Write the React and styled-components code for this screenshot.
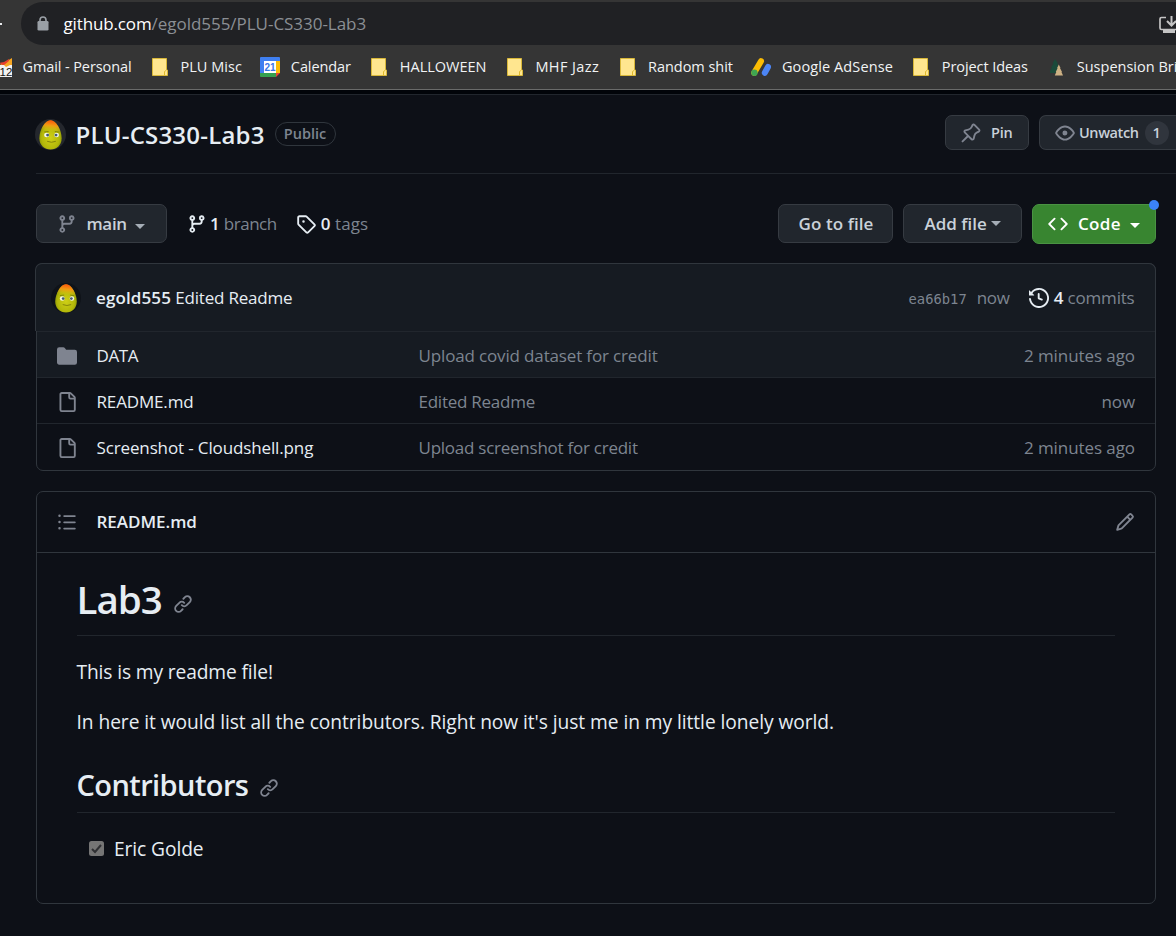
import React from 'react';
import styled, { createGlobalStyle } from 'styled-components';

const Global = createGlobalStyle`
  * { box-sizing: border-box; }
  html, body { margin: 0; height: 936px; overflow: hidden; background: #0d1017; }
  body { font-family: "Open Sans", "Noto Sans", sans-serif; color: #e6edf3; }
`;

const OCTICONS = {
  branch: 'M9.5 3.25a2.25 2.25 0 1 1 3 2.122V6A2.5 2.5 0 0 1 10 8.5H6a1 1 0 0 0-1 1v1.128a2.251 2.251 0 1 1-1.5 0V5.372a2.25 2.25 0 1 1 1.5 0v1.836A2.493 2.493 0 0 1 6 7h4a1 1 0 0 0 1-1v-.628A2.25 2.25 0 0 1 9.5 3.25Zm-6 0a.75.75 0 1 0 1.5 0 .75.75 0 0 0-1.5 0Zm8.25-.75a.75.75 0 1 0 0 1.5.75.75 0 0 0 0-1.5ZM4.25 12a.75.75 0 1 0 0 1.5.75.75 0 0 0 0-1.5Z',
  tag: 'M1 7.775V2.75C1 1.784 1.784 1 2.75 1h5.025c.464 0 .91.184 1.238.513l6.25 6.25a1.75 1.75 0 0 1 0 2.474l-5.026 5.026a1.75 1.75 0 0 1-2.474 0l-6.25-6.25A1.752 1.752 0 0 1 1 7.775Zm1.5 0c0 .066.026.13.073.177l6.25 6.25a.25.25 0 0 0 .354 0l5.025-5.025a.25.25 0 0 0 0-.354l-6.25-6.25a.25.25 0 0 0-.177-.073H2.75a.25.25 0 0 0-.25.25ZM6 5a1 1 0 1 1 0 2 1 1 0 0 1 0-2Z',
  pin: 'm11.294.984 3.722 3.722a1.75 1.75 0 0 1-.504 2.826l-1.327.613a3.089 3.089 0 0 0-1.707 2.084l-.584 2.454c-.317 1.332-1.972 1.8-2.94.832L5.75 11.311 1.78 15.28a.749.749 0 1 1-1.06-1.06l3.969-3.97-2.204-2.204c-.968-.968-.5-2.623.832-2.94l2.454-.584a3.08 3.08 0 0 0 2.084-1.707l.613-1.327a1.75 1.75 0 0 1 2.826-.504ZM6.283 9.723l2.732 2.731a.25.25 0 0 0 .42-.119l.584-2.454a4.586 4.586 0 0 1 2.537-3.098l1.328-.613a.25.25 0 0 0 .072-.404l-3.722-3.722a.25.25 0 0 0-.404.072l-.613 1.328a4.584 4.584 0 0 1-3.098 2.537l-2.454.584a.25.25 0 0 0-.119.42l2.731 2.732Z',
  eye: 'M8 2c1.981 0 3.671.992 4.933 2.078 1.27 1.091 2.187 2.345 2.637 3.023a1.62 1.62 0 0 1 0 1.798c-.45.678-1.367 1.932-2.637 3.023C11.67 13.008 9.981 14 8 14c-1.981 0-3.671-.992-4.933-2.078C1.797 10.83.88 9.576.43 8.898a1.62 1.62 0 0 1 0-1.798c.45-.677 1.367-1.931 2.637-3.022C4.33 2.992 6.019 2 8 2ZM1.679 7.932a.12.12 0 0 0 0 .136c.411.622 1.241 1.75 2.366 2.717C5.176 11.758 6.527 12.5 8 12.5c1.473 0 2.825-.742 3.955-1.715 1.124-.967 1.954-2.096 2.366-2.717a.12.12 0 0 0 0-.136c-.412-.621-1.242-1.75-2.366-2.717C10.824 4.242 9.473 3.5 8 3.5c-1.473 0-2.825.742-3.955 1.715-1.124.967-1.954 2.096-2.366 2.717ZM8 10a2 2 0 1 1-.001-3.999A2 2 0 0 1 8 10Z',
  history: 'm.427 1.927 1.215 1.215a8.002 8.002 0 1 1-1.6 5.685.75.75 0 1 1 1.493-.154 6.5 6.5 0 1 0 1.18-4.458l1.358 1.358A.25.25 0 0 1 3.896 6H.25A.25.25 0 0 1 0 5.75V2.104a.25.25 0 0 1 .427-.177ZM7.75 4a.75.75 0 0 1 .75.75v2.992l2.028.812a.75.75 0 0 1-.557 1.392l-2.5-1A.751.751 0 0 1 7 8.25v-3.5A.75.75 0 0 1 7.75 4Z',
  file: 'M2 1.75C2 .784 2.784 0 3.75 0h6.586c.464 0 .909.184 1.237.513l2.914 2.914c.329.328.513.773.513 1.237v9.586A1.75 1.75 0 0 1 13.25 16h-9.5A1.75 1.75 0 0 1 2 14.25Zm1.75-.25a.25.25 0 0 0-.25.25v12.5c0 .138.112.25.25.25h9.5a.25.25 0 0 0 .25-.25V6h-2.75A1.75 1.75 0 0 1 9 4.25V1.5Zm6.75.062V4.25c0 .138.112.25.25.25h2.688l-.011-.013-2.914-2.914-.013-.011Z',
  folder: 'M1.75 1A1.75 1.75 0 0 0 0 2.75v10.5C0 14.216.784 15 1.75 15h12.5A1.75 1.75 0 0 0 16 13.25v-8.5A1.75 1.75 0 0 0 14.25 3H7.5a.25.25 0 0 1-.2-.1l-.9-1.2C6.07 1.26 5.55 1 5 1H1.75Z',
  list: 'M5.75 2.5h8.5a.75.75 0 0 1 0 1.5h-8.5a.75.75 0 0 1 0-1.5Zm0 5h8.5a.75.75 0 0 1 0 1.5h-8.5a.75.75 0 0 1 0-1.5Zm0 5h8.5a.75.75 0 0 1 0 1.5h-8.5a.75.75 0 0 1 0-1.5ZM2 14a1 1 0 1 1 0-2 1 1 0 0 1 0 2Zm1-6a1 1 0 1 1-2 0 1 1 0 0 1 2 0ZM2 4a1 1 0 1 1 0-2 1 1 0 0 1 0 2Z',
  pencil: 'M11.013 1.427a1.75 1.75 0 0 1 2.474 0l1.086 1.086a1.75 1.75 0 0 1 0 2.474l-8.61 8.61c-.21.21-.47.364-.756.445l-3.251.93a.75.75 0 0 1-.927-.928l.929-3.25c.081-.286.235-.547.445-.758l8.61-8.61Zm.176 4.823L9.75 4.81l-6.286 6.287a.253.253 0 0 0-.064.108l-.558 1.953 1.953-.558a.253.253 0 0 0 .108-.064Zm1.238-3.763a.25.25 0 0 0-.354 0L10.811 3.75l1.439 1.44 1.263-1.263a.25.25 0 0 0 0-.354Z',
  link: 'm7.775 3.275 1.25-1.25a3.5 3.5 0 1 1 4.95 4.95l-2.5 2.5a3.5 3.5 0 0 1-4.95 0 .751.751 0 0 1 .018-1.042.751.751 0 0 1 1.042-.018 1.998 1.998 0 0 0 2.83 0l2.5-2.5a2.002 2.002 0 0 0-2.83-2.83l-1.25 1.25a.751.751 0 0 1-1.042-.018.751.751 0 0 1-.018-1.042Zm-4.69 9.64a1.998 1.998 0 0 0 2.83 0l1.25-1.25a.751.751 0 0 1 1.042.018.751.751 0 0 1 .018 1.042l-1.25 1.25a3.5 3.5 0 1 1-4.95-4.95l2.5-2.5a3.5 3.5 0 0 1 4.95 0 .751.751 0 0 1-.018 1.042.751.751 0 0 1-1.042.018 1.998 1.998 0 0 0-2.83 0l-2.5 2.5a1.998 1.998 0 0 0 0 2.83Z',
  code: 'm11.28 3.22 4.25 4.25a.75.75 0 0 1 0 1.06l-4.25 4.25a.749.749 0 0 1-1.275-.326.749.749 0 0 1 .215-.734L13.94 8l-3.72-3.72a.749.749 0 0 1 .326-1.275.749.749 0 0 1 .734.215Zm-6.56 0a.751.751 0 0 1 1.042.018.751.751 0 0 1 .018 1.042L2.06 8l3.72 3.72a.749.749 0 0 1-.326 1.275.749.749 0 0 1-.734-.215L.47 8.53a.75.75 0 0 1 0-1.06Z',
};

const IconSvg = styled.svg`
  display: block;
  flex: none;
  fill: ${(p) => p.$color};
`;
const Icon = ({ name, size = 20, color = '#7f8490' }) => (
  <IconSvg width={size} height={size} viewBox="0 0 16 16" $color={color}>
    <path d={OCTICONS[name]} />
  </IconSvg>
);

const Text = styled.span`
  flex: none;
  white-space: pre;
  font-size: ${(p) => p.$size || 17}px;
  line-height: 24px;
  font-weight: ${(p) => (p.$bold ? 600 : 400)};
  letter-spacing: ${(p) => p.$track || 0}px;
  color: ${(p) => p.$color || '#e6edf3'};
`;

/* Browser chrome */
const Chrome = styled.header`
  height: 90px;
  background: #353535;
  border-bottom: 1px solid #6a6b6a;
  padding-top: 2px;
  overflow: hidden;
`;
const AddressRow = styled.div`
  display: flex;
  align-items: center;
  height: 43px;
`;
const ToolbarEdge = styled.div`
  width: 21px;
  flex: none;
`;
const ToolbarTick = styled.div`
  width: 2px;
  height: 2px;
  background: #e8eaed;
`;
const AddressBar = styled.div`
  flex: 1;
  height: 43px;
  display: flex;
  align-items: center;
  background: #202124;
  border-radius: 22px 0 0 22px;
  padding-left: 16px;
`;
const Url = styled.div`
  display: flex;
  flex: 1;
  margin-left: 14.5px;
`;
const InstallSlot = styled.div`
  width: 18px;
  overflow: hidden;
  padding-top: 7px;
`;
const Bookmarks = styled.nav`
  display: flex;
  align-items: center;
  gap: 18.4px;
  height: 44px;
  margin-left: -8px;
  width: 1300px;
`;
const Bookmark = styled.div`
  display: flex;
  align-items: center;
  gap: 10.5px;
  flex: none;
`;
const BookmarkIcon = styled.div`
  width: 20px;
  height: 20px;
  flex: none;
`;
const Gap = styled.div`
  height: 5px;
  background: #010409;
  border-bottom: 1px solid #21262d;
`;

/* Repository page */
const Page = styled.main`
  padding-left: 36px;
`;
const TitleRow = styled.div`
  display: flex;
  align-items: center;
  height: 79px;
  border-bottom: 1px solid #21262d;
  padding: 0 0 3px;
`;
const RepoId = styled.div`
  display: flex;
  align-items: center;
  margin-left: -1px;
  padding-top: 3px;
`;
const RepoTitle = styled.h1`
  margin: 0 0 0 9.5px;
  font-size: 24px;
  line-height: 32px;
  font-weight: 600;
  letter-spacing: 0.2px;
  padding-top: 1px;
  flex: none;
`;
const Pill = styled.span`
  height: 24px;
  width: 61px;
  margin-left: 10px;
  border: 1px solid #30363d;
  border-radius: 12px;
  display: flex;
  align-items: center;
  justify-content: center;
  flex: none;
`;
const Spacer = styled.div`
  flex: 1;
`;
const Button = styled.button`
  position: relative;
  display: flex;
  align-items: center;
  flex: none;
  gap: ${(p) => p.$gap || 0}px;
  width: ${(p) => p.$w}px;
  height: ${(p) => p.$h || 39}px;
  padding: 0 0 0 ${(p) => p.$pad}px;
  margin-left: ${(p) => p.$ml || 0}px;
  font-family: inherit;
  border: 1px solid ${(p) => (p.$green ? '#4a9343' : '#363b42')};
  background: ${(p) => (p.$green ? '#388530' : '#21262d')};
  border-radius: ${(p) => (p.$open ? '7px 0 0 7px' : '7px')};
  border-right-width: ${(p) => (p.$open ? 0 : 1)}px;
`;
const Count = styled.span`
  width: 24px;
  height: 24px;
  border-radius: 12px;
  margin-left: 2px;
  background: #30353d;
  display: flex;
  align-items: center;
  justify-content: center;
`;
const Caret = styled.i`
  width: 0;
  height: 0;
  border: 5px solid transparent;
  border-top-color: ${(p) => p.$color || '#a5adb6'};
  border-bottom-width: 0;
  margin-left: -1px;
  margin-top: ${(p) => p.$drop || 0}px;
`;
const NoticeDot = styled.i`
  position: absolute;
  top: -5px;
  right: -4px;
  width: 10px;
  height: 10px;
  border-radius: 5px;
  background: #3b82f6;
`;
const ActionRow = styled.div`
  display: flex;
  align-items: flex-start;
  height: 89px;
  padding: 30px 20px 0 0;
`;
const Stat = styled.div`
  display: flex;
  align-items: center;
  height: 39px;
  margin-left: ${(p) => p.$ml}px;
`;
const StatText = styled.div`
  margin-left: ${(p) => p.$ml || 0}px;
  display: flex;
`;

const Box = styled.section`
  width: 1120px;
  border: 1px solid #30363d;
  border-radius: 7px;
`;
const CommitBar = styled.div`
  display: flex;
  align-items: center;
  height: 68px;
  margin: -1px -1px 0 -2px;
  padding: 0 20.5px 0 15px;
  background: #161b22;
  border: 1px solid #30363d;
  border-bottom: 0;
  border-radius: 7px 7px 0 0;
`;
const FileRow = styled.div`
  display: grid;
  grid-template-columns: 39.5px 322px 1fr auto;
  align-items: center;
  height: 46px;
  padding: 2px 20px 0;
  border-top: 1px solid #21262d;
  background: ${(p) => (p.$active ? '#161b22' : 'transparent')};
  &:last-child { height: 47px; padding-bottom: 1px; }
`;
const Hash = styled.span`
  font-family: "DejaVu Sans Mono", "Liberation Mono", monospace;
  font-size: 13.8px;
  line-height: 24px;
  color: #7d8590;
  margin-right: 10px;
  padding-top: 2px;
`;

const Readme = styled(Box)`
  margin-top: 20px;
  height: 413px;
`;
const ReadmeBar = styled.div`
  display: flex;
  align-items: center;
  height: 61px;
  padding: 0 20px;
  border-bottom: 1px solid #30363d;
`;
const Body = styled.article`
  padding: 20px 40px;
`;
const Heading = styled.h2`
  display: flex;
  align-items: center;
  margin: ${(p) => p.$top || 0}px 0 0 -0.5px;
  height: ${(p) => p.$h}px;
  padding-bottom: ${(p) => p.$pb}px;
  border-bottom: 1px solid #21262d;
  font-size: ${(p) => p.$size}px;
  letter-spacing: ${(p) => p.$track}px;
  font-weight: 600;
  gap: ${(p) => p.$gap}px;
`;
const LinkSlot = styled.span`
  padding-top: ${(p) => p.$top}px;
`;
const Paragraph = styled.p`
  margin: ${(p) => p.$top}px 0 0 -0.5px;
  font-size: 19.2px;
  line-height: 30px;
  letter-spacing: ${(p) => p.$track}px;
  white-space: nowrap;
`;
const Task = styled.div`
  display: flex;
  align-items: center;
  gap: 10.5px;
  margin-top: 21px;
  padding-left: 12px;
  height: 30px;
`;
const Checkbox = styled.span`
  width: 15px;
  height: 15px;
  border-radius: 2.5px;
  background: #757575;
  display: flex;
  margin-top: -1px;
`;

const Egg = ({ size, ring }) => (
  <svg width={size} height={size} viewBox="0 0 32 32">
    <defs>
      <radialGradient id={`egg${size}`} cx="0.5" cy="0.6" r="0.65">
        <stop offset="0" stopColor="#cfd016" />
        <stop offset="0.6" stopColor="#b3b80a" />
        <stop offset="1" stopColor="#6e7c02" />
      </radialGradient>
      <linearGradient id={`cap${size}`} x1="0.65" y1="0" x2="0.45" y2="1">
        <stop offset="0" stopColor="#ff4d0c" />
        <stop offset="0.5" stopColor="#f99a14" stopOpacity="0.9" />
        <stop offset="1" stopColor="#e0c414" stopOpacity="0" />
      </linearGradient>
    </defs>
    <circle cx="16" cy="16" r="16" fill={ring} />
    <path d="M16 1.2C10.5 1.2 4.5 11 4.5 19.8 4.5 27 9.5 31.4 16 31.4S27.5 27 27.5 19.8C27.5 11 21.5 1.2 16 1.2Z" fill={`url(#egg${size})`} />
    <path d="M16 1.2C11.8 1.2 7.8 6.5 5.9 12.5L26.1 12.5C24.2 6.5 20.2 1.2 16 1.2Z" fill={`url(#cap${size})`} />
    <ellipse cx="12" cy="16.5" rx="2.6" ry="2.4" fill="#f4f7ea" />
    <ellipse cx="22.3" cy="16.5" rx="2.4" ry="2.4" fill="#f4f7ea" />
    <circle cx="13" cy="16.6" r="1.5" fill="#465a72" />
    <circle cx="21.7" cy="16.6" r="1.5" fill="#465a72" />
    <path d="M9.5 13.4l4.500-.5M20.5 12.9l4 .6M12.500 23q4.500 2 9 0" stroke="#7a7a08" strokeWidth="0.9" fill="none" />
  </svg>
);

const FolderMark = () => (
  <svg width="20" height="20" viewBox="0 0 20 20">
    <path d="M2.5 1.5H16.5V13H17.5V18.5H2.5Z" fill="#ffe68f" stroke="#d9b839" />
    <path d="M14.5 18.5V14.5L16 13.5" fill="none" stroke="#e0b92c" />
  </svg>
);
const CalendarMark = () => (
  <svg width="20" height="20" viewBox="0 0 20 20">
    <path d="M0 1a1 1 0 0 1 1-1H19a1 1 0 0 1 1 1V4H0Z" fill="#3f7ff0" />
    <path d="M0 3H4V16H0Z" fill="#3f7ff0" />
    <path d="M16 4H20V16H16Z" fill="#fbbc04" />
    <path d="M0 16H16V20H1a1 1 0 0 1-1-1Z" fill="#34a04f" />
    <path d="M16 16H20L16 20Z" fill="#ea4335" />
    <path d="M4 4H16V16H4Z" fill="#fff" />
    <text x="10" y="14" textAnchor="middle" fontSize="10" fontWeight="700" fontFamily="Liberation Sans" fill="#3a76e8">21</text>
  </svg>
);
const AdsenseMark = () => (
  <svg width="20" height="20" viewBox="0 0 20 20" fill="none" strokeLinecap="round" strokeWidth="6">
    <path d="M3.2 15.8L10 4.2" stroke="#fbbc04" />
    <path d="M13.8 15.8L17 10" stroke="#4c85f5" />
    <circle cx="3.4" cy="15.8" r="3.2" fill="#3fa652" />
  </svg>
);
const TreeMark = () => (
  <svg width="20" height="20" viewBox="0 0 20 20">
    <path d="M9 2L12 6.5H11L13.5 10H12.5L14 16H4V14L6 10.5H5L7.5 6.5H6.5Z" fill="#1b4a3a" />
    <path d="M12.8 7.5L14.5 11H14L16 15H15.5L17 18.5H8.8L10.3 15H9.8L11.6 11H11.1Z" fill="#cdb184" />
  </svg>
);
const GmailMark = () => (
  <svg width="20" height="20" viewBox="0 0 20 20">
    <path d="M5 9L12 6 20 1V8L12 12Z" fill="#f5a623" />
    <path d="M7 6L12 9 17 4V2L12 5Z" fill="#e5402e" />
    <path d="M6 8H20V20H6Z" fill="#f2f2f2" />
    <path d="M12 8L20 2V7L14 10Z" fill="#f5a623" />
    <text x="14" y="18.5" textAnchor="middle" fontSize="11.5" fontFamily="Liberation Sans" fill="#161616">12</text>
  </svg>
);

const bookmarks = [
  { label: 'Gmail - Personal', track: -0.1, Mark: GmailMark },
  { label: 'PLU Misc', track: 0.05, Mark: FolderMark },
  { label: 'Calendar', track: -0.09, Mark: CalendarMark },
  { label: 'HALLOWEEN', track: 0, Mark: FolderMark },
  { label: 'MHF Jazz', track: 0.4, Mark: FolderMark },
  { label: 'Random shit', track: -0.03, Mark: FolderMark },
  { label: 'Google AdSense', track: 0.11, Mark: AdsenseMark },
  { label: 'Project Ideas', track: -0.08, Mark: FolderMark },
  { label: 'Suspension Bridge', track: 0, Mark: TreeMark },
];

const files = [
  { icon: 'folder', name: 'DATA', track: -0.4, message: 'Upload covid dataset for credit', messageTrack: -0.15, age: '2 minutes ago', active: true },
  { icon: 'file', name: 'README.md', track: -0.15, message: 'Edited Readme', messageTrack: -0.25, age: 'now' },
  { icon: 'file', name: 'Screenshot - Cloudshell.png', track: -0.13, message: 'Upload screenshot for credit', messageTrack: -0.25, age: '2 minutes ago' },
];

const MUTED = '#7d8590';
const BTN = '#c9d1d9';

export default function App() {
  return (
    <>
      <Global />
      <Chrome>
        <AddressRow>
          <ToolbarEdge><ToolbarTick /></ToolbarEdge>
          <AddressBar>
            <svg width="12" height="15" viewBox="0 0 12 15">
              <path d="M3 6V4a3 3 0 0 1 6 0v2" fill="none" stroke="#9aa0a6" strokeWidth="1.6" />
              <rect x="0.5" y="5" width="11" height="9.5" rx="1.3" fill="#9aa0a6" />
            </svg>
            <Url>
              <Text $track={-0.14} $color="#fff">github.com</Text>
              <Text $track={-0.03} $color="#8b8f94">/egold555/PLU-CS330-Lab3</Text>
            </Url>
            <InstallSlot>
              <svg width="24" height="18" viewBox="0 0 24 18" fill="none" stroke="#c4c4c4" strokeWidth="1.7">
                <path d="M8 1.5H3.5a1.500 1.500 0 0 0-1.500 1.500V12a1.500 1.500 0 0 0 1.500 1.500H22" />
                <path d="M13.5 0V9M9 5L13.5 9.5 18 5" strokeWidth="2" />
                <path d="M5 15.5H17" strokeWidth="3" />
              </svg>
            </InstallSlot>
          </AddressBar>
        </AddressRow>
        <Bookmarks>
          {bookmarks.map(({ label, track, Mark }) => (
            <Bookmark key={label}>
              <BookmarkIcon><Mark /></BookmarkIcon>
              <Text $size={14.5} $track={track} $color="#f1f3f4">{label}</Text>
            </Bookmark>
          ))}
        </Bookmarks>
      </Chrome>
      <Gap />
      <Page>
        <TitleRow>
          <RepoId>
            <Egg size={31} ring="#24272d" />
            <RepoTitle>PLU-CS330-Lab3</RepoTitle>
            <Pill><Text $size={14.5} $bold $color={MUTED}>Public</Text></Pill>
          </RepoId>
          <Spacer />
          <Button $w={84} $h={35} $pad={15} $gap={10}>
            <Icon name="pin" />
            <Text $size={14.5} $bold $track={-0.2} $color={BTN}>Pin</Text>
          </Button>
          <Button $w={137} $h={35} $pad={15} $ml={10} $gap={4} $open>
            <Icon name="eye" />
            <Text $size={14.5} $bold $track={-0.4} $color={BTN}>Unwatch</Text>
            <Count><Text $size={14.5} $bold $color={BTN}>1</Text></Count>
          </Button>
        </TitleRow>

        <ActionRow>
          <Button $w={131} $pad={20} $gap={9.5}>
            <Icon name="branch" />
            <Text $bold $track={-0.35} $color={BTN}>main</Text>
            <Caret $drop={5} />
          </Button>
          <Stat $ml={20}>
            <Icon name="branch" color="#e6edf3" />
            <StatText $ml={3}>
              <Text $bold>1</Text>
              <Text $track={-0.45} $color={MUTED}> branch</Text>
            </StatText>
          </Stat>
          <Stat $ml={19}>
            <Icon name="tag" color="#e6edf3" />
            <StatText $ml={5}>
              <Text $bold>0</Text>
              <Text $track={0.1} $color={MUTED}> tags</Text>
            </StatText>
          </Stat>
          <Spacer />
          <Button $w={115} $pad={19.5}>
            <Text $bold $track={0.09} $color={BTN}>Go to file</Text>
          </Button>
          <Button $w={119} $pad={20.5} $ml={10} $gap={5}>
            <Text $bold $color={BTN}>Add file</Text>
            <Caret />
          </Button>
          <Button $w={124} $h={40} $pad={15} $ml={10} $gap={10} $green>
            <Icon name="code" color="#fff" />
            <Text $bold $track={0.3} $color="#fff">Code</Text>
            <Caret $color="#fff" $drop={3} />
            <NoticeDot />
          </Button>
        </ActionRow>

        <Box>
          <CommitBar>
            <Egg size={30} ring="#0f1319" />
            <StatText $ml={15}>
              <Text $bold $track={0.12}>egold555</Text>
              <Text $track={-0.2}> Edited Readme</Text>
            </StatText>
            <Spacer />
            <Hash>ea66b17</Hash>
            <Text $track={-0.3} $color={MUTED}>now</Text>
            <Stat $ml={19}>
              <Icon name="history" color="#e6edf3" />
              <StatText $ml={5}>
                <Text $bold>4</Text>
                <Text $track={-0.2} $color={MUTED}> commits</Text>
              </StatText>
            </Stat>
          </CommitBar>
          {files.map((f) => (
            <FileRow key={f.name} $active={f.active}>
              <Icon name={f.icon} />
              <Text $track={f.track}>{f.name}</Text>
              <Text $track={f.messageTrack} $color={MUTED}>{f.message}</Text>
              <Text $track={-0.08} $color={MUTED}>{f.age}</Text>
            </FileRow>
          ))}
        </Box>

        <Readme>
          <ReadmeBar>
            <Icon name="list" />
            <StatText $ml={19.5}><Text $bold $track={-0.03}>README.md</Text></StatText>
            <Spacer />
            <Icon name="pencil" />
          </ReadmeBar>
          <Body>
            <Heading $h={63} $pb={10} $size={38.5} $track={-0.95} $gap={11.5}>
              Lab3
              <LinkSlot $top={10}><Icon name="link" /></LinkSlot>
            </Heading>
            <Paragraph $top={21} $track={-0.12}>This is my readme file!</Paragraph>
            <Paragraph $top={20} $track={-0.06}>
              In here it would list all the contributors. Right now it's just me in my little lonely world.
            </Paragraph>
            <Heading $top={27} $h={49} $pb={8} $size={29} $track={-0.58} $gap={10.5}>
              Contributors
              <LinkSlot $top={7}><Icon name="link" /></LinkSlot>
            </Heading>
            <Task>
              <Checkbox>
                <svg width="15" height="15" viewBox="0 0 15 15" fill="none">
                  <path d="M3 8L6 11 12 4" stroke="#2f3033" strokeWidth="2" />
                </svg>
              </Checkbox>
              <Paragraph $top={0} $track={-0.09}>Eric Golde</Paragraph>
            </Task>
          </Body>
        </Readme>
      </Page>
    </>
  );
}
